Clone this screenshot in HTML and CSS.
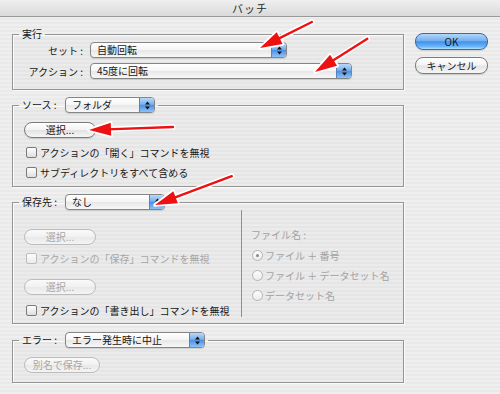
FILE: index.html
```html
<!DOCTYPE html>
<html lang="ja">
<head>
  <meta charset="UTF-8">
  <title>バッチ</title>
  <link rel="stylesheet" href="styles.css">
</head>
<body>
  <div class="dialog">
    <div class="titlebar">バッチ</div>
    <div class="content">
      <div class="groups">

        <fieldset class="group group-run">
          <legend>実行</legend>
          <div class="field-row">
            <span class="field-label">セット :</span>
            <div class="popup popup-set"><span class="popup-text">自動回転</span><span class="popup-caret"><svg width="5" height="9" viewBox="0 0 5 9"><polygon points="0,3.5 2.5,0.5 5,3.5"/><polygon points="0,5.5 2.5,8.5 5,5.5"/></svg></span></div>
          </div>
          <div class="field-row">
            <span class="field-label">アクション :</span>
            <div class="popup popup-action"><span class="popup-text">45度に回転</span><span class="popup-caret"><svg width="5" height="9" viewBox="0 0 5 9"><polygon points="0,3.5 2.5,0.5 5,3.5"/><polygon points="0,5.5 2.5,8.5 5,5.5"/></svg></span></div>
          </div>
        </fieldset>

        <fieldset class="group group-source">
          <legend>
            <span class="legend-label">ソース :</span>
            <div class="popup popup-source"><span class="popup-text">フォルダ</span><span class="popup-caret"><svg width="5" height="9" viewBox="0 0 5 9"><polygon points="0,3.5 2.5,0.5 5,3.5"/><polygon points="0,5.5 2.5,8.5 5,5.5"/></svg></span></div>
          </legend>
          <button class="btn btn-select">選択...</button>
          <div class="check check-open"><span class="box"></span>アクションの「開く」コマンドを無視</div>
          <div class="check check-sub"><span class="box"></span>サブディレクトリをすべて含める</div>
        </fieldset>

        <fieldset class="group group-dest">
          <legend>
            <span class="legend-label">保存先 :</span>
            <div class="popup popup-dest"><span class="popup-text">なし</span><span class="popup-caret"><svg width="5" height="9" viewBox="0 0 5 9"><polygon points="0,3.5 2.5,0.5 5,3.5"/><polygon points="0,5.5 2.5,8.5 5,5.5"/></svg></span></div>
          </legend>
          <div class="dest-body">
            <div class="dest-left">
              <button class="btn btn-select" disabled>選択...</button>
              <div class="check disabled check-save"><span class="box"></span>アクションの「保存」コマンドを無視</div>
              <button class="btn btn-select btn-export" disabled>選択...</button>
              <div class="check check-export"><span class="box"></span>アクションの「書き出し」コマンドを無視</div>
            </div>
            <div class="dest-right">
              <div class="naming-title">ファイル名 :</div>
              <div class="radio checked"><span class="dot"></span>ファイル ＋ 番号</div>
              <div class="radio"><span class="dot"></span>ファイル ＋ データセット名</div>
              <div class="radio"><span class="dot"></span>データセット名</div>
            </div>
          </div>
        </fieldset>

        <fieldset class="group group-error">
          <legend>
            <span class="legend-label">エラー :</span>
            <div class="popup popup-error"><span class="popup-text">エラー発生時に中止</span><span class="popup-caret"><svg width="5" height="9" viewBox="0 0 5 9"><polygon points="0,3.5 2.5,0.5 5,3.5"/><polygon points="0,5.5 2.5,8.5 5,5.5"/></svg></span></div>
          </legend>
          <button class="btn btn-alias" disabled>別名で保存...</button>
        </fieldset>

      </div>
      <div class="side">
        <button class="btn btn-side btn-default">OK</button>
        <button class="btn btn-side">キャンセル</button>
      </div>
    </div>

    <!-- red callout arrows drawn over the dialog -->
    <svg class="arrows" width="500" height="394" viewBox="0 0 500 394">
      <g transform="translate(260 48) rotate(-26.6)">
        <line class="halo" x1="18" y1="0" x2="58" y2="0"/>
        <polygon class="halo-head" points="0,0 22,-6.5 22,6.5"/>
        <line class="shaft" x1="18" y1="0" x2="58" y2="0"/>
        <polygon class="head" points="0,0 22,-6.5 22,6.5"/>
      </g>
      <g transform="translate(315 72) rotate(-32.4)">
        <line class="halo" x1="18" y1="0" x2="62" y2="0"/>
        <polygon class="halo-head" points="0,0 22,-6.5 22,6.5"/>
        <line class="shaft" x1="18" y1="0" x2="62" y2="0"/>
        <polygon class="head" points="0,0 22,-6.5 22,6.5"/>
      </g>
      <g transform="translate(89 130) rotate(-2)">
        <line class="halo" x1="18" y1="0" x2="84" y2="0"/>
        <polygon class="halo-head" points="0,0 22,-6.5 22,6.5"/>
        <line class="shaft" x1="18" y1="0" x2="84" y2="0"/>
        <polygon class="head" points="0,0 22,-6.5 22,6.5"/>
      </g>
      <g transform="translate(155 205) rotate(-20.6)">
        <line class="halo" x1="18" y1="0" x2="82" y2="0"/>
        <polygon class="halo-head" points="0,0 22,-6.5 22,6.5"/>
        <line class="shaft" x1="18" y1="0" x2="82" y2="0"/>
        <polygon class="head" points="0,0 22,-6.5 22,6.5"/>
      </g>
    </svg>
  </div>
</body>
</html>
```

FILE: styles.css
```css
* {
  box-sizing: border-box;
}
body {
  margin: 0;
  font-family: "Noto Sans CJK JP", sans-serif;
  font-size: 10px;
  color: #161616;
}
.dialog {
  position: relative;
  width: 500px;
  height: 394px;
  overflow: hidden;
  background: repeating-linear-gradient(#efefef 0 2px, #e9e9e9 2px 4px);
}
.titlebar {
  height: 17px;
  line-height: 16px;
  text-align: center;
  font-size: 11px;
  letter-spacing: 1px;
  color: #2a2a2a;
  background: linear-gradient(#efefef, #dadada);
  border-bottom: 1px solid #9a9a9a;
}
.content {
  display: flex;
  gap: 11px;
  padding: 9px 12px 0 12px;
}
.groups {
  width: 392px;
  display: flex;
  flex-direction: column;
  gap: 7px;
}
.side {
  width: 73px;
  display: flex;
  flex-direction: column;
  gap: 7px;
  padding-top: 7px;
}

/* group boxes */
.group {
  margin: 0;
  min-width: 0;
  border: 1px solid #949494;
  box-shadow: 1px 1px 0 #fbfbfb, inset 1px 1px 0 #fbfbfb;
  padding: 0 11px;
  background: rgba(0, 0, 0, 0.015);
}
.group legend {
  display: flex;
  align-items: center;
  gap: 3px;
  height: 16px;
  margin-left: -5px;
  padding: 0 3px;
  line-height: 14px;
}
.legend-label {
  width: 40px;
}
.group-run {
  padding-bottom: 10px;
}
.group-source {
  padding-top: 9px;
  padding-bottom: 7px;
}
.group-dest {
  padding-bottom: 6px;
}
.group-error {
  margin-top: 1px;
  padding-top: 9px;
  padding-bottom: 9px;
}

/* label + popup rows */
.field-row {
  display: flex;
  align-items: center;
  gap: 7px;
  height: 16px;
}
.field-row + .field-row {
  margin-top: 5px;
}
.field-label {
  width: 59px;
  text-align: right;
  white-space: nowrap;
}

/* aqua popup menu */
.popup {
  display: flex;
  align-items: center;
  height: 16px;
  border: 1px solid #858585;
  border-radius: 4px;
  padding-left: 6px;
  background: linear-gradient(#ffffff, #f5f5f5 48%, #e7e7e7 52%, #f8f8f8);
  box-shadow: 0 1px 1px rgba(0, 0, 0, 0.12);
  line-height: 14px;
}
.popup-text {
  flex: 1;
  white-space: nowrap;
}
.popup-caret {
  width: 15px;
  height: 14px;
  display: flex;
  align-items: center;
  justify-content: center;
  border-left: 1px solid #5d82b8;
  border-radius: 0 3px 3px 0;
  background: linear-gradient(#b9d8f8, #78b0ee 45%, #4d8fe3 52%, #8cc3f6);
}
.popup-caret svg {
  fill: #111;
}
.popup-set { width: 197px; }
.popup-action { width: 262px; }
.popup-source { width: 90px; }
.popup-dest { width: 100px; }
.popup-error { width: 140px; }

/* aqua push buttons */
.btn {
  display: block;
  height: 16px;
  padding: 0;
  font: inherit;
  line-height: 14px;
  color: #161616;
  text-align: center;
  border: 1px solid #7b7b7b;
  border-radius: 8px;
  background: linear-gradient(#ffffff, #f3f3f3 48%, #e2e2e2 52%, #f7f7f7);
  box-shadow: 0 1px 1px rgba(0, 0, 0, 0.12);
}
.btn:disabled {
  color: #a6a6a6;
  border-color: #bcbcbc;
  background: linear-gradient(#fafafa, #f1f1f1 48%, #e9e9e9 52%, #f4f4f4);
  box-shadow: none;
}
.btn-select { width: 72px; }
.btn-alias { width: 76px; }
.btn-side {
  width: 73px;
  height: 17px;
  line-height: 15px;
}
.btn-default {
  border-color: #40679e;
  background: linear-gradient(#b3d6fa, #74b0f0 45%, #4390e8 52%, #6cb8fa 85%, #b2e0ff);
}

/* checkboxes */
.check {
  display: flex;
  align-items: center;
  gap: 3px;
  height: 14px;
  margin-left: 2px;
  white-space: nowrap;
}
.check .box {
  width: 11px;
  height: 11px;
  border: 1px solid #7a7a7a;
  border-radius: 2px;
  background: linear-gradient(#ffffff, #dedede);
}
.check.disabled {
  color: #a6a6a6;
}
.check.disabled .box {
  border-color: #bcbcbc;
  background: linear-gradient(#fcfcfc, #ececec);
}
.check-open { margin-top: 7px; }
.check-sub { margin-top: 6px; }
.check-save { margin-top: 6px; }
.check-export { margin-top: 8px; }
.btn-export { margin-top: 14px; }

/* destination section */
.dest-body {
  display: flex;
}
.dest-left {
  width: 217px;
  padding-top: 19px;
  display: flex;
  flex-direction: column;
  align-items: flex-start;
}
.dest-right {
  flex: 1;
  border-left: 1px solid #8f8f8f;
  padding: 18px 0 0 9px;
  display: flex;
  flex-direction: column;
  gap: 6px;
  color: #a2a2a2;
}
.naming-title {
  height: 14px;
  line-height: 14px;
}
.radio {
  display: flex;
  align-items: center;
  gap: 2px;
  height: 14px;
  margin-left: 1px;
  white-space: nowrap;
}
.radio .dot {
  width: 11px;
  height: 11px;
  border: 1px solid #b4b4b4;
  border-radius: 50%;
  background: linear-gradient(#fdfdfd, #ebebeb);
  display: flex;
  align-items: center;
  justify-content: center;
}
.radio.checked .dot::after {
  content: "";
  width: 3px;
  height: 3px;
  border-radius: 50%;
  background: #8a8a8a;
}

/* callout arrows */
.arrows {
  position: absolute;
  top: 0;
  left: 0;
  pointer-events: none;
}
.arrows .halo {
  stroke: #fff;
  stroke-width: 5.5;
  stroke-linecap: round;
}
.arrows .halo-head {
  fill: #fff;
  stroke: #fff;
  stroke-width: 3.5;
  stroke-linejoin: round;
}
.arrows .shaft {
  stroke: #ee1111;
  stroke-width: 2.4;
  stroke-linecap: round;
}
.arrows .head {
  fill: #ee1111;
}
```
